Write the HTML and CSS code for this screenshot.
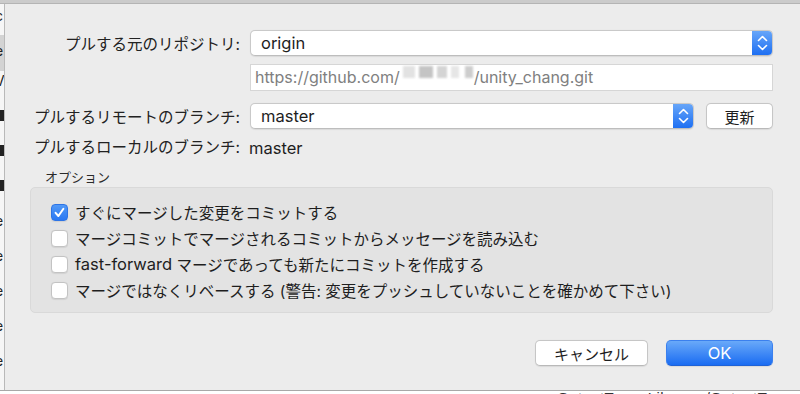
FILE: index.html
```html
<!DOCTYPE html>
<html lang="ja">
<head>
<meta charset="utf-8">
<title>プル</title>
<link rel="stylesheet" href="styles.css">
</head>
<body>
<div class="window">
  <div class="topbar"></div>
  <div class="main">
    <div class="side">
      <div class="side-row r1">c</div>
      <div class="side-row r2 hl">e</div>
      <div class="side-row">V</div>
      <div class="side-row">■</div>
      <div class="side-row">■</div>
      <div class="side-row">■</div>
      <div class="side-row">e</div>
      <div class="side-row">e</div>
      <div class="side-row">e</div>
      <div class="side-row">e</div>
      <div class="side-row">e</div>
    </div>
    <div class="sheet">
      <div class="row">
        <div class="label">プルする元のリポジトリ:</div>
        <div class="popup">
          <span class="popup-text lat">origin</span>
          <span class="stepper">
            <svg width="21" height="26" viewBox="0 0 21 26"><path d="M6.5 10.5 L10.5 6.5 L14.5 10.5 M6.5 15.5 L10.5 19.5 L14.5 15.5" fill="none" stroke="#fff" stroke-width="1.6" stroke-linecap="round" stroke-linejoin="round"/></svg>
          </span>
        </div>
      </div>
      <div class="row row-url">
        <div class="label"></div>
        <div class="field">https://github.com/<span class="blur"><span class="b1"></span><span class="b2"></span><span class="b3"></span><span class="b4"></span><span class="b5"></span></span>/unity_chang.git</div>
      </div>
      <div class="row row-remote">
        <div class="label">プルするリモートのブランチ:</div>
        <div class="popup">
          <span class="popup-text lat">master</span>
          <span class="stepper">
            <svg width="21" height="26" viewBox="0 0 21 26"><path d="M6.5 10.5 L10.5 6.5 L14.5 10.5 M6.5 15.5 L10.5 19.5 L14.5 15.5" fill="none" stroke="#fff" stroke-width="1.6" stroke-linecap="round" stroke-linejoin="round"/></svg>
          </span>
        </div>
        <button class="btn btn-refresh">更新</button>
      </div>
      <div class="row row-local">
        <div class="label">プルするローカルのブランチ:</div>
        <div class="value lat">master</div>
      </div>
      <div class="group-title">オプション</div>
      <div class="group">
        <label class="check-row"><span class="check checked"><svg width="17" height="17" viewBox="0 0 17 17"><path d="M4.6 8.8 L7.4 12 L12.4 4.8" fill="none" stroke="#fff" stroke-width="2" stroke-linecap="round" stroke-linejoin="round"/></svg></span>すぐにマージした変更をコミットする</label>
        <label class="check-row"><span class="check"></span>マージコミットでマージされるコミットからメッセージを読み込む</label>
        <label class="check-row"><span class="check"></span><span class="lat">fast-forward</span>&nbsp;マージであっても新たにコミットを作成する</label>
        <label class="check-row"><span class="check"></span>マージではなくリベースする (警告: 変更をプッシュしていないことを確かめて下さい)</label>
      </div>
      <div class="actions">
        <button class="btn btn-cancel">キャンセル</button>
        <button class="btn btn-ok">OK</button>
      </div>
    </div>
  </div>
  <div class="bottom"><span class="bottom-text">&lt;OutputType&gt;Library&lt;/OutputType&gt;</span></div>
</div>
</body>
</html>
```
FILE: styles.css
```css
* { box-sizing: border-box; }
html, body {
  margin: 0;
  padding: 0;
  width: 800px;
  height: 394px;
  overflow: hidden;
  background: #ffffff;
}
body {
  font-family: "Inter", "Noto Sans CJK JP", sans-serif;
  font-size: 15.5px;
  color: #222;
}
.lat { font-size: 16.5px; }
.window {
  width: 800px;
  height: 394px;
  display: flex;
  flex-direction: column;
}
.topbar {
  height: 4px;
  flex: 0 0 4px;
  background: #cbcbcb;
  border-bottom: 1px solid #b4b4b4;
}
.main {
  flex: 0 0 386px;
  display: flex;
}
.side {
  flex: 0 0 5px;
  background: #f6f6f6;
  border-right: 1px solid #b9b9b9;
  overflow: hidden;
  padding-top: 2px;
}
.side-row {
  height: 35px;
  line-height: 20px;
  font-size: 14px;
  color: #222;
  margin-left: -5px;
  white-space: nowrap;
}
.side-row.r1 { height: 29px; }
.side-row.hl { background: #d3d3d3; height: 36px; padding-top: 6px; }
.sheet {
  flex: 1;
  background: #ececec;
  padding: 26px 27px 0 0;
  display: flex;
  flex-direction: column;
}
.row {
  display: flex;
  align-items: center;
}
.label {
  flex: 0 0 235px;
  margin-right: 10px;
  text-align: right;
  white-space: nowrap;
}
.popup {
  flex: 1;
  height: 26px;
  display: flex;
  align-items: stretch;
  background: #fff;
  border: 1px solid #c9c9c9;
  border-bottom-color: #bdbdbd;
  border-radius: 5px;
  box-shadow: 0 0.5px 1px rgba(0,0,0,0.08);
  overflow: hidden;
}
.popup-text {
  flex: 1;
  padding-left: 10px;
  line-height: 24px;
  color: #1e1e1e;
}
.stepper {
  flex: 0 0 21px;
  margin: -1px -1px -1px 0;
  background: linear-gradient(#6aa8f9, #1b6df2);
  display: flex;
  align-items: center;
  justify-content: center;
}
.stepper svg { display: block; }
.row-url { margin-top: 8px; }
.field {
  flex: 1;
  height: 27px;
  background: #fff;
  border: 1px solid #d6d6d6;
  padding-left: 4px;
  line-height: 25px;
  font-size: 16px;
  color: #808080;
  white-space: nowrap;
}
.blur {
  display: inline-block;
  width: 74px;
  height: 14px;
  vertical-align: -1px;
  filter: blur(1.2px);
}
.blur span {
  display: inline-block;
  height: 12px;
  vertical-align: top;
}
.blur .b1 { width: 12px; background: #e2e2e2; margin-left: 3px; }
.blur .b2 { width: 14px; background: #c4c4c4; margin-left: 4px; }
.blur .b3 { width: 10px; background: #d4d4d4; margin-left: 4px; }
.blur .b4 { width: 8px; background: #e6e6e6; margin-left: 4px; }
.blur .b5 { width: 8px; background: #cdcdcd; margin-left: 6px; }
.row-remote { margin-top: 12px; }
.btn {
  font-family: "Inter", "Noto Sans CJK JP", sans-serif;
  font-size: 15px;
  height: 26px;
  padding: 0;
  background: #fff;
  color: #1e1e1e;
  border: 1px solid #c6c6c6;
  border-bottom-color: #b9b9b9;
  border-radius: 5px;
  box-shadow: 0 0.5px 1px rgba(0,0,0,0.08);
}
.btn-refresh {
  flex: 0 0 67px;
  margin-left: 12px;
}
.row-local {
  margin-top: 10px;
  line-height: 18px;
}
.value { color: #1e1e1e; margin-left: -1px; }
.group-title {
  margin-top: 12px;
  margin-left: 40px;
  font-size: 13px;
  line-height: 16px;
  color: #2a2a2a;
}
.group {
  margin-top: 2px;
  margin-left: 25px;
  height: 126px;
  background: #e3e3e3;
  border: 1px solid #d9d9d9;
  border-radius: 5px;
  padding: 11px 0 0 20px;
  display: flex;
  flex-direction: column;
}
.check-row {
  height: 26px;
  display: flex;
  align-items: center;
  white-space: nowrap;
  color: #1e1e1e;
}
.check {
  flex: 0 0 17px;
  width: 17px;
  height: 17px;
  margin-right: 7px;
  background: #fff;
  border: 1px solid #c3c3c3;
  border-radius: 4px;
  box-shadow: 0 0.5px 1px rgba(0,0,0,0.08);
}
.check.checked {
  background: linear-gradient(#5199f7, #2a78f3);
  border-color: #2d74e6;
}
.check svg { display: block; margin: -1px; }
.actions {
  margin-top: 27px;
  display: flex;
  justify-content: flex-end;
}
.btn-cancel { width: 113px; }
.btn-ok {
  width: 107px;
  margin-left: 18px;
  color: #fff;
  font-size: 16.5px;
  background: linear-gradient(#69a9f9, #1a6cf2);
  border-color: #3b80ee;
  border-bottom-color: #1f62d6;
}
.bottom {
  flex: 0 0 4px;
  border-top: 1px solid #a8a8a8;
  background: #fff;
  overflow: hidden;
  padding-left: 548px;
}
.bottom-text {
  display: block;
  font-family: "Liberation Sans", sans-serif;
  font-size: 15px;
  line-height: 15px;
  color: #333;
  white-space: nowrap;
  margin-top: -1px;
  letter-spacing: 0.4px;
}
```
